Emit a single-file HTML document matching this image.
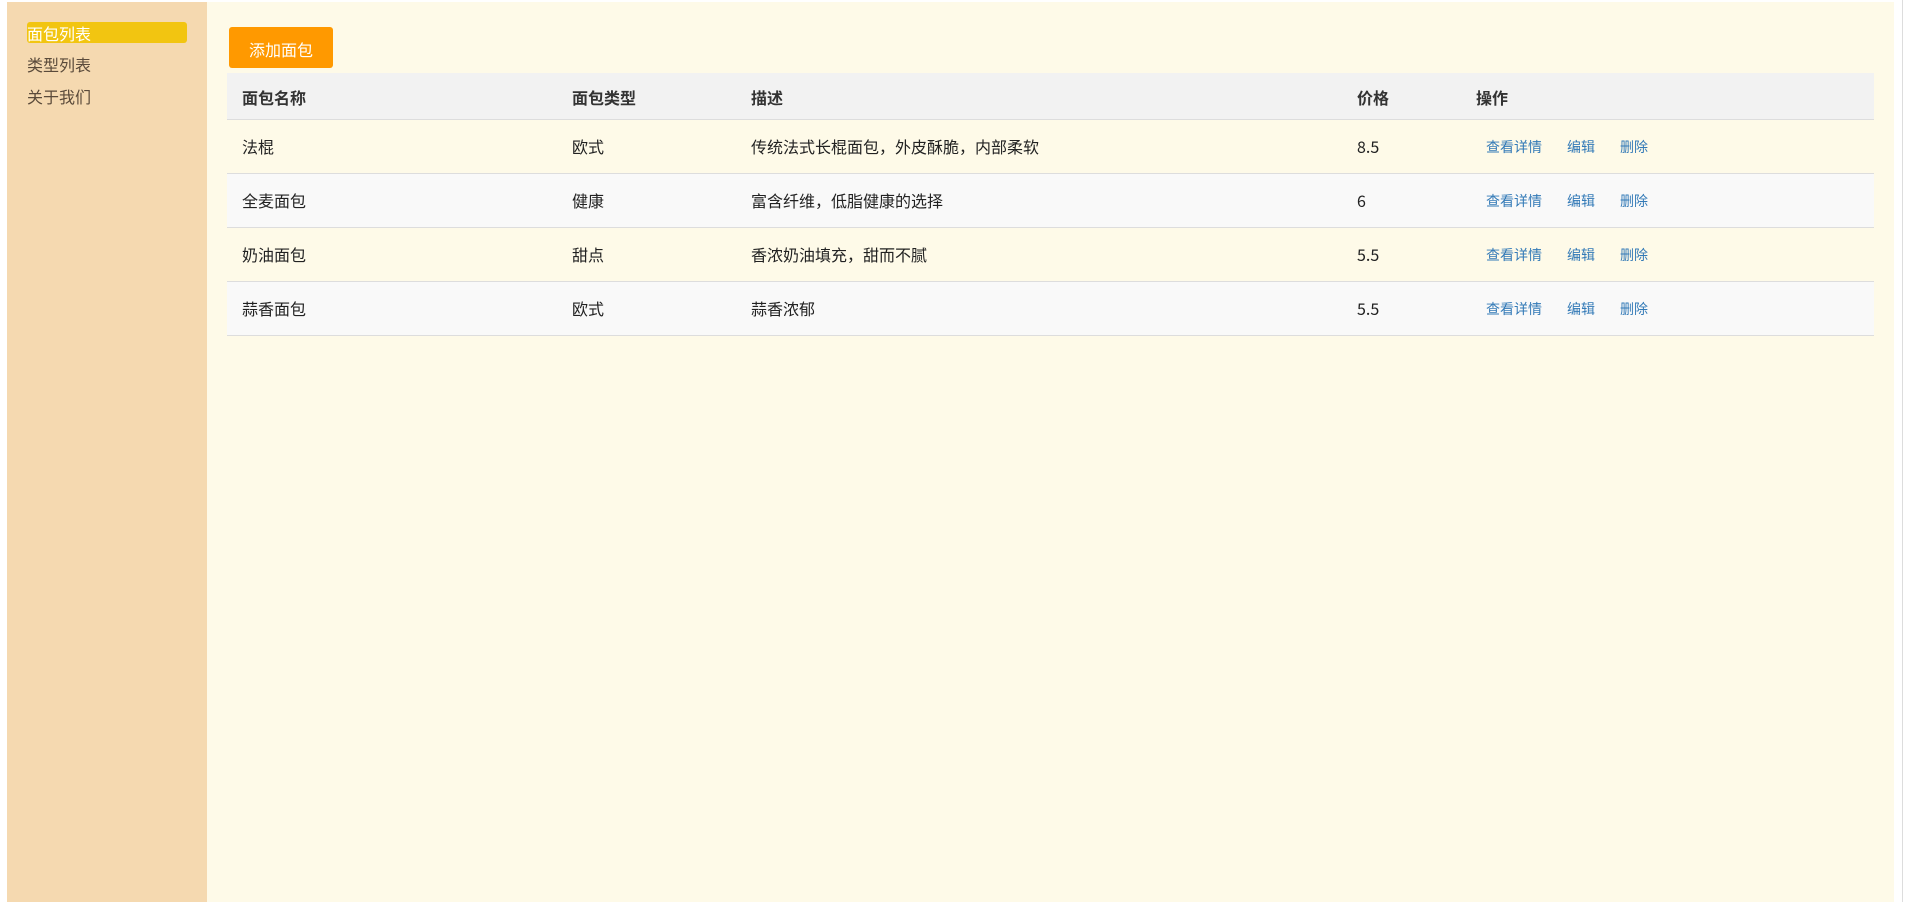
<!DOCTYPE html>
<html><head><meta charset="utf-8"><style>
*{margin:0;padding:0;box-sizing:border-box}
html,body{width:1905px;height:902px;background:#fff;overflow:hidden;font-family:"Noto Sans CJK SC","Liberation Sans",sans-serif}
.side{position:absolute;left:7px;top:2px;width:200px;height:900px;background:#f5d9b0}
.nav{position:absolute;left:27px;width:160px;height:21px;font-size:16px;line-height:20px;color:#5a4a3a}
.nav.on{background:#f2c511;color:#fff;border-radius:3px;line-height:23px}
.main{position:absolute;left:207px;top:2px;width:1687px;height:900px;background:#fefae8}
.edge{position:absolute;left:1902px;top:0;width:1px;height:902px;background:#ddd}
.btn{position:absolute;left:229px;top:27px;width:104px;height:41px;background:#ff9900;color:#fff;border-radius:3px;font-size:16px;line-height:44px;text-align:center}
table{position:absolute;left:227px;top:73px;width:1647px;border-collapse:collapse;table-layout:fixed;font-size:16px;color:#222}
th{background:#f2f2f2;height:46px;text-align:left;padding-left:15px;padding-top:2px;font-weight:bold;color:#333;border-bottom:1px solid #ddd;line-height:20px}
td{height:54px;padding-left:15px;padding-top:0px;border-bottom:1px solid #ddd;line-height:20px;vertical-align:middle}
tr.e td{background:#f9f9f9}
a{color:#337ab7;font-size:14px;text-decoration:none;margin-left:25px}
a.f{margin-left:10px}
</style></head><body>
<div class="side"></div>
<div class="nav on" style="top:22px">面包列表</div>
<div class="nav" style="top:54px">类型列表</div>
<div class="nav" style="top:86px">关于我们</div>
<div class="main"></div>
<div class="edge"></div>
<div class="btn">添加面包</div>
<table>
<colgroup><col style="width:330px"><col style="width:179px"><col style="width:606px"><col style="width:119px"><col></colgroup>
<tr><th>面包名称</th><th>面包类型</th><th>描述</th><th>价格</th><th>操作</th></tr>
<tr><td>法棍</td><td>欧式</td><td>传统法式长棍面包，外皮酥脆，内部柔软</td><td>8.5</td><td><a class="f">查看详情</a><a>编辑</a><a>删除</a></td></tr>
<tr class="e"><td>全麦面包</td><td>健康</td><td>富含纤维，低脂健康的选择</td><td>6</td><td><a class="f">查看详情</a><a>编辑</a><a>删除</a></td></tr>
<tr><td>奶油面包</td><td>甜点</td><td>香浓奶油填充，甜而不腻</td><td>5.5</td><td><a class="f">查看详情</a><a>编辑</a><a>删除</a></td></tr>
<tr class="e"><td>蒜香面包</td><td>欧式</td><td>蒜香浓郁</td><td>5.5</td><td><a class="f">查看详情</a><a>编辑</a><a>删除</a></td></tr>
</table>
</body></html>
